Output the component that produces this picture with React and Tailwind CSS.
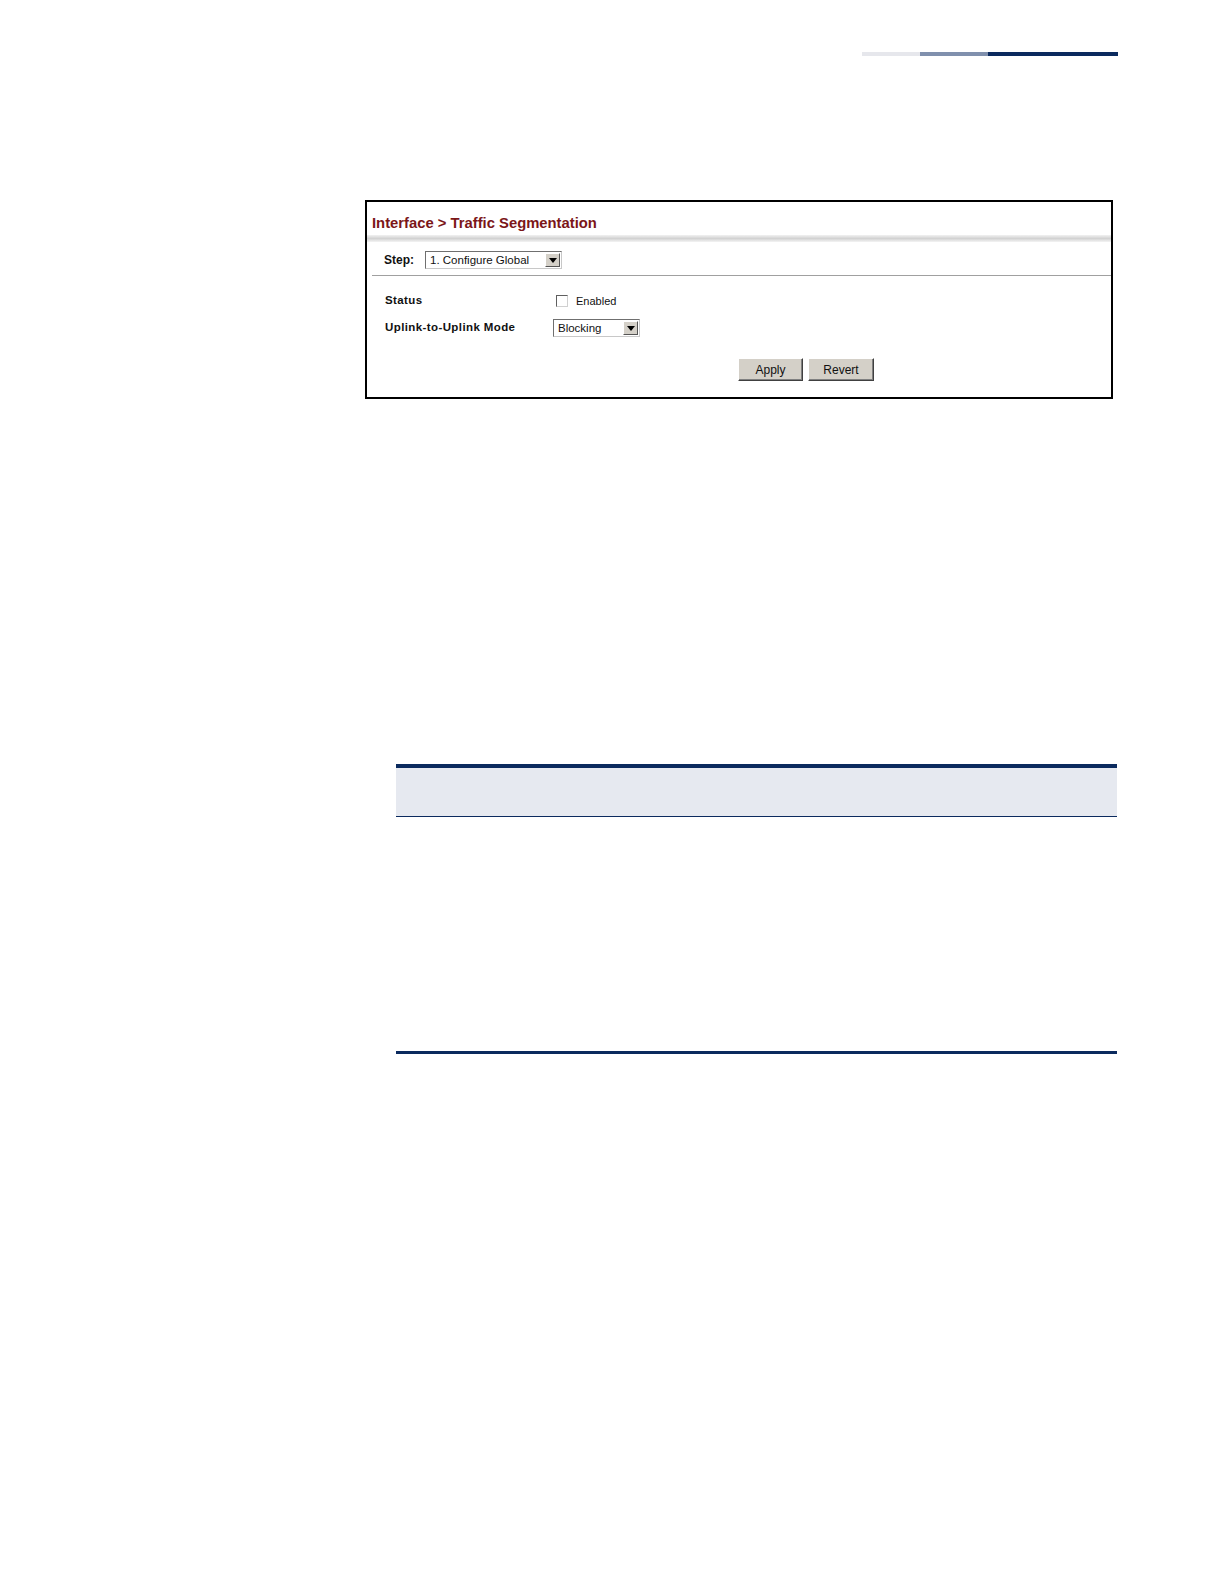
import React from 'react';

// small windows-classic style dropdown
function Dropdown({ value, width }) {
  return (
    <div
      className={`flex h-[18px] items-center border border-t-[#6f6f6f] border-l-[#6f6f6f] border-b-[#c8c8c8] border-r-[#c8c8c8] bg-white ${width}`}
    >
      <span className="flex-1 truncate pl-[4px] text-[11.5px] leading-[16px] text-[#111]">{value}</span>
      <span className="mr-[1px] flex h-[14px] w-[15px] items-center justify-center border border-t-white border-l-white border-b-[#555] border-r-[#555] bg-[#d4d0c8]">
        <svg width="8" height="5" viewBox="0 0 8 5">
          <path d="M0 0 L8 0 L4 5 Z" fill="#000" />
        </svg>
      </span>
    </div>
  );
}

function ClassicButton({ children, width }) {
  return (
    <button
      className={`h-[23px] ${width} border border-t-white border-l-white border-b-[#404040] border-r-[#404040] bg-[#d4d0c8] text-[12px] text-[#111] shadow-[inset_-1px_-1px_0_#808080]`}
    >
      {children}
    </button>
  );
}

export default function App() {
  return (
    <div className="h-[1584px] w-[1224px] bg-white pt-[52px] font-['Liberation_Sans',Arial,sans-serif]">
      {/* page header rule */}
      <div className="ml-[862px] flex h-[4px]">
        <div className="w-[58px] bg-[#e6e7ec]" />
        <div className="w-[68px] bg-[#8090ad]" />
        <div className="w-[130px] bg-[#0b2a5e]" />
      </div>

      {/* screen capture panel */}
      <div className="ml-[365px] mt-[144px] h-[199px] w-[748px] border-2 border-black">
        <div className="h-[33px] pl-[5px] pt-[11px] text-[14.8px] font-bold leading-[20px] text-[#7b1618]">
          Interface &gt; Traffic Segmentation
        </div>
        <div className="h-[7px] bg-gradient-to-b from-[#f2f2f2] via-[#d2d2d2] to-[#f4f4f4]" />

        <div className="flex items-center pl-[17px] pt-[9px] pb-[6px]">
          <span className="w-[41px] text-[12px] font-bold text-[#111]">Step:</span>
          <Dropdown value="1. Configure Global" width="w-[137px]" />
        </div>
        <div className="ml-[5px] h-px bg-[#a0a0a0]" />

        <div className="mt-[18px] flex h-[14px] items-center pl-[18px]">
          <span className="w-[168px] text-[11.5px] font-bold tracking-[0.4px] text-[#111]">Status</span>
          <span className="ml-[3px] h-[12px] w-[12px] border border-t-[#5f5f5f] border-l-[#5f5f5f] border-b-[#d0d0d0] border-r-[#d0d0d0] bg-white" />
          <span className="ml-[8px] text-[11px] text-[#111]">Enabled</span>
        </div>

        <div className="mt-[11px] flex items-center pl-[18px]">
          <span className="w-[168px] text-[11.5px] font-bold tracking-[0.4px] text-[#111]">Uplink-to-Uplink Mode</span>
          <Dropdown value="Blocking" width="w-[87px]" />
        </div>

        <div className="ml-[371px] mt-[21px] flex gap-[5px]">
          <ClassicButton width="w-[65px]">Apply</ClassicButton>
          <ClassicButton width="w-[66px]">Revert</ClassicButton>
        </div>
      </div>

      {/* parameter table */}
      <div className="ml-[396px] mt-[365px] w-[721px]">
        <div className="h-[4px] bg-[#0b2a5e]" />
        <div className="h-[48px] bg-[#e6e9f0]" />
        <div className="h-px bg-[#0b2a5e]" />
        <div className="h-[234px]" />
        <div className="h-[3px] bg-[#0b2a5e]" />
      </div>
    </div>
  );
}
